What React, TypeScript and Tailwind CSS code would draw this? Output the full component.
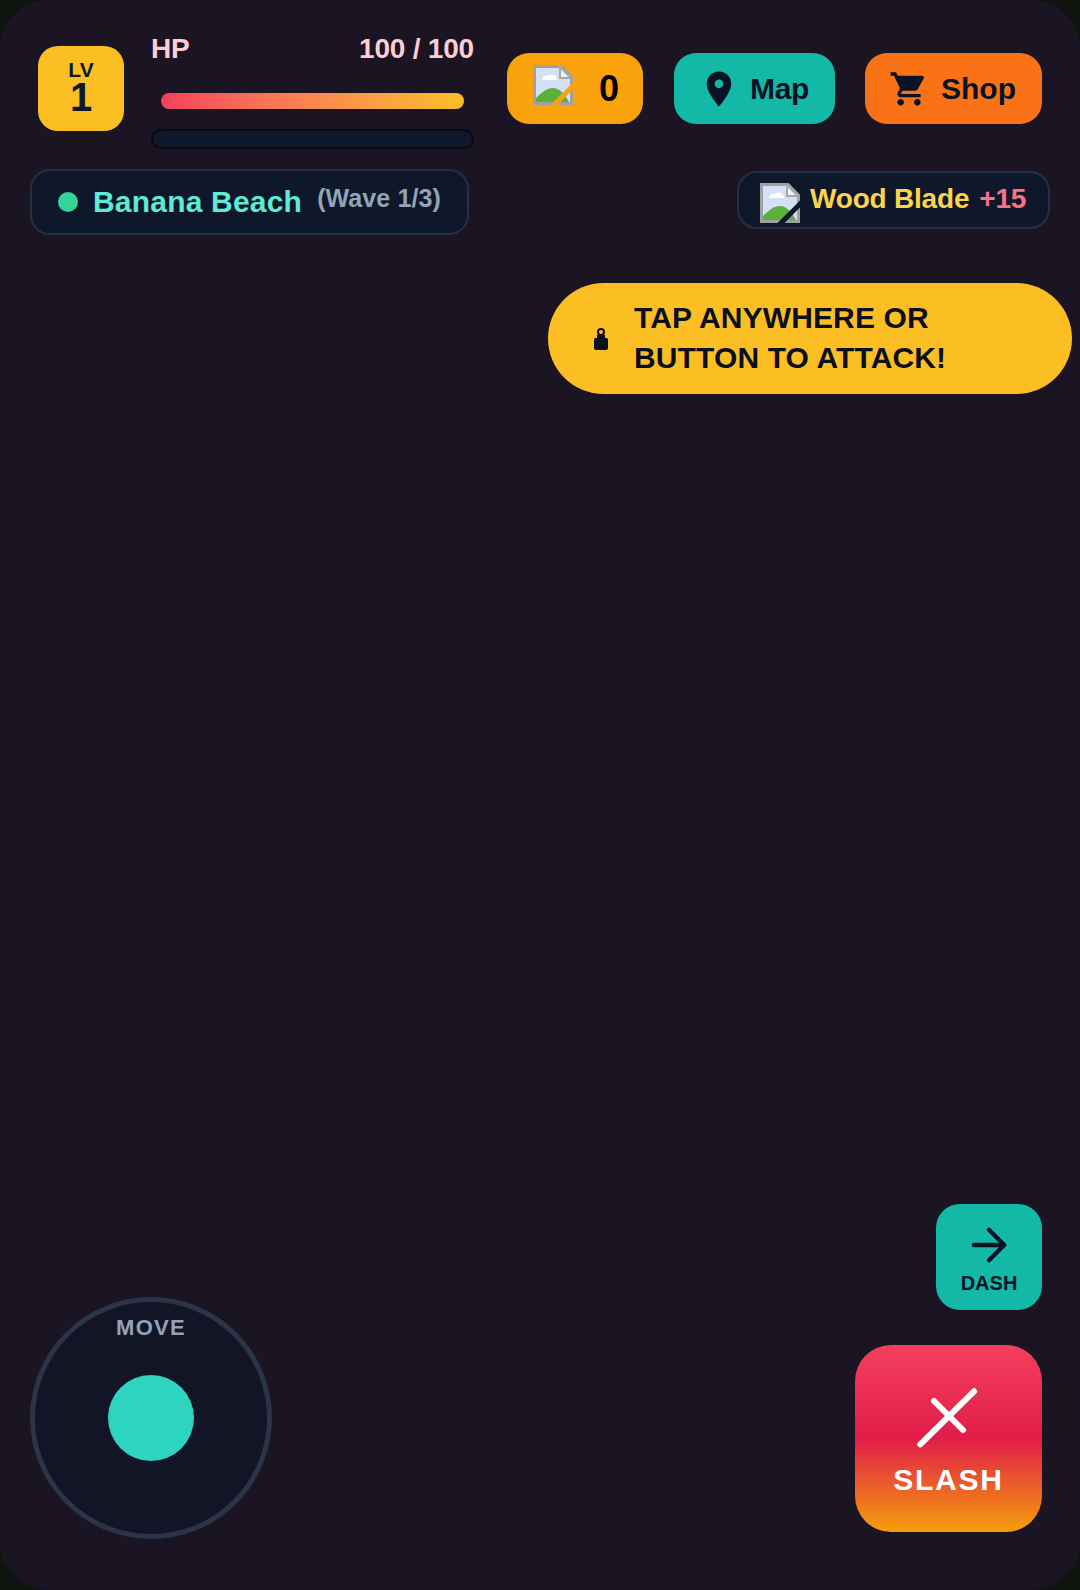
import { ArrowRight } from "lucide-react";

const BrokenImage = ({ cut, className }: { cut: string; className: string }) => (
  <svg viewBox="0 0 40 40" className={className}>
    <path d="M1.5 1.5H28L38.5 12V38.5H1.5Z" fill="#d5e0f5" stroke="#a0a0a0" strokeWidth="3" />
    <path d="M27 2V13H38Z" fill="#eef2fa" stroke="#a8a8a8" strokeWidth="2" />
    <path d="M9 15a4 4 0 0 1 5-4 6 6 0 0 1 10 4Z" fill="#fff" />
    <path d="M3 37V33C9 27 14 23 20 23C26 23 31 28 36 37Z" fill="#5cb038" />
    <path d="M17 44L44 17" stroke={cut} strokeWidth="5" />
  </svg>
);

export default function App() {
  return (
    <div className="h-[1590px] w-[1080px] overflow-hidden bg-[#0f140f] font-['Liberation_Sans',sans-serif]">
      <div className="flex h-full flex-col rounded-[48px] bg-[#1a1423]">
        <div className="flex items-start pl-[38px] pr-[38px] pt-[34px]">
          <div className="mt-[12px] flex h-[85px] w-[86px] flex-col items-center justify-center rounded-[20px] bg-[#fbbf24] pb-[6px] text-[#0f172a]">
            <span className="text-[21px] font-bold leading-[22px]">LV</span>
            <span className="text-[40px] font-bold leading-[32px]">1</span>
          </div>

          <div className="ml-[27px] w-[323px]">
            <div className="flex justify-between text-[28px] font-bold leading-[30px] tracking-[-0.2px] text-[#fecdd3]">
              <span>HP</span>
              <span>100 / 100</span>
            </div>
            <div className="mx-[10px] mt-[29px] h-[16px] rounded-full bg-gradient-to-r from-[#f43f5e] to-[#fbbf24]" />
            <div className="mt-[20px] h-[20px] rounded-full border-2 border-[#090912] bg-[#0f172a]" />
          </div>

          <div className="ml-[33px] mt-[19px] flex h-[71px] w-[136px] items-center rounded-[22px] bg-[#f9a20b] pl-[26px]">
            <BrokenImage cut="#f9a20b" className="mb-[8px] h-[40px] w-[40px]" />
            <span className="ml-[26px] text-[36px] font-bold text-black">0</span>
          </div>
          <div className="ml-[31px] mt-[19px] flex h-[71px] w-[161px] items-center rounded-[22px] bg-[#14b8a6] pl-[24px] text-[#0a1226]">
            <svg viewBox="0 0 24 24" className="h-[42px] w-[42px]" fill="currentColor">
              <path d="M12 2C8.13 2 5 5.13 5 9c0 5.25 7 13 7 13s7-7.75 7-13c0-3.87-3.13-7-7-7zm0 9.5c-1.38 0-2.5-1.12-2.5-2.5s1.12-2.5 2.5-2.5 2.5 1.12 2.5 2.5-1.12 2.5-2.5 2.5z" />
            </svg>
            <span className="ml-[10px] text-[30px] font-bold tracking-[-0.3px]">Map</span>
          </div>
          <div className="ml-[30px] mt-[19px] flex h-[71px] w-[177px] items-center rounded-[22px] bg-[#f97316] pl-[24px] text-[#0a1226]">
            <svg viewBox="0 0 24 24" className="h-[40px] w-[40px]" fill="currentColor">
              <path d="M7 18c-1.1 0-1.99.9-1.99 2S5.9 22 7 22s2-.9 2-2-.9-2-2-2zM1 2v2h2l3.6 7.59-1.35 2.45c-.16.28-.25.61-.25.96 0 1.1.9 2 2 2h12v-2H7.42c-.14 0-.25-.11-.25-.25l.03-.12.9-1.63h7.45c.75 0 1.41-.41 1.75-1.03l3.58-6.47c.08-.14.12-.31.12-.48 0-.55-.45-1-1-1H5.21l-.94-2H1zm16 16c-1.1 0-1.99.9-1.99 2s.89 2 1.99 2 2-.9 2-2-.9-2-2-2z" />
            </svg>
            <span className="ml-[12px] text-[30px] font-bold">Shop</span>
          </div>
        </div>

        <div className="mt-[20px] flex items-start justify-between pl-[30px] pr-[30px]">
          <div className="flex h-[66px] w-[439px] items-center rounded-[20px] border-2 border-[#253044] bg-[#0f172a] pl-[26px]">
            <span className="h-[20px] w-[20px] rounded-full bg-[#34d399]" />
            <span className="mb-[2px] ml-[15px] text-[30px] font-bold tracking-[0.2px] text-[#5eead4]">Banana Beach</span>
            <span className="mb-[6px] ml-[15px] text-[25px] font-bold tracking-[0.1px] text-[#94a3b8]">(Wave 1/3)</span>
          </div>
          <div className="mt-[2px] flex h-[58px] w-[313px] items-center rounded-[20px] border-2 border-[#253044] bg-[#0f172a] pl-[21px]">
            <BrokenImage cut="#0f172a" className="mt-[6px] h-[40px] w-[40px]" />
            <span className="mb-[3px] ml-[10px] text-[28px] font-bold tracking-[-0.2px] text-[#fcd34d]">Wood Blade</span>
            <span className="mb-[3px] ml-[10px] text-[28px] font-bold tracking-[-0.2px] text-[#fb7185]">+15</span>
          </div>
        </div>

        <div className="ml-[548px] mt-[48px] flex h-[111px] w-[524px] items-center rounded-full bg-[#fbbf24] pl-[46px]">
          <svg viewBox="0 0 14 22" className="h-[22px] w-[14px]" fill="#0b0f1c">
            <circle cx="7" cy="4" r="3" fill="none" stroke="#0b0f1c" strokeWidth="2" />
            <path d="M3 7H11V10H12.5Q14 10 14 12V20Q14 22 12 22H2Q0 22 0 20V12Q0 10 1.5 10H3Z" />
          </svg>
          <span className="mb-[2px] ml-[26px] text-[30px] font-bold leading-[40px] tracking-[0.13px] text-[#0b0f1c]">
            TAP ANYWHERE OR
            <br />
            BUTTON TO ATTACK!
          </span>
        </div>

        <div className="mt-auto flex items-end justify-between pb-[51px] pl-[30px] pr-[38px]">
          <div className="flex h-[242px] w-[242px] flex-col items-center rounded-full border-[5px] border-[#2b3547] bg-[#111526]">
            <span className="mt-[13px] text-[22px] font-bold leading-[26px] tracking-[1.3px] text-[#94a3b8]">MOVE</span>
            <span className="mt-[34px] h-[86px] w-[86px] rounded-full bg-[#2dd4bf]" />
          </div>

          <div className="mb-[7px] flex flex-col items-end">
            <div className="flex h-[106px] w-[106px] flex-col items-center justify-center rounded-[24px] bg-[#14b8a6] text-[#0a1226]">
              <ArrowRight className="h-[52px] w-[52px]" strokeWidth={2} />
              <span className="text-[20px] font-bold leading-[24px]">DASH</span>
            </div>
            <div className="mt-[35px] flex h-[187px] w-[187px] flex-col items-center rounded-[36px] bg-[linear-gradient(180deg,#f43f5e_0%,#e11d48_50%,#f59e0b_100%)] text-white">
              <svg viewBox="0 0 60 60" className="mt-[42px] h-[60px] w-[60px] overflow-visible" stroke="#fff" strokeWidth="6" strokeLinecap="round">
                <path d="M1.3 57.3L55 4.3" />
                <path d="M15 14L44 43" />
              </svg>
              <span className="mt-[15px] text-[30px] font-bold leading-[36px] tracking-[1.8px]">SLASH</span>
            </div>
          </div>
        </div>
      </div>
    </div>
  );
}
